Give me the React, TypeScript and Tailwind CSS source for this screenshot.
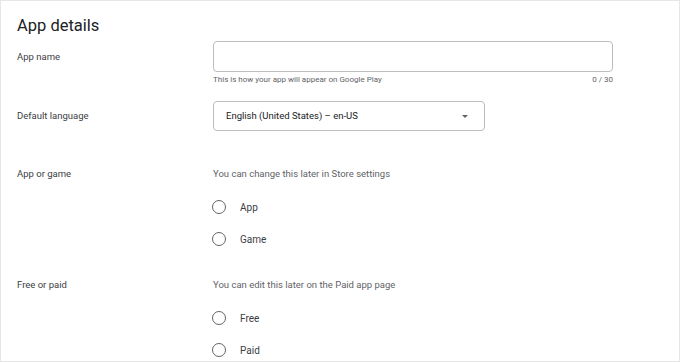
import React from "react";

const font = { fontFamily: "Roboto, 'Liberation Sans', sans-serif" };

function Radio({ label }: { label: string }) {
  return (
    <label className="flex items-center h-[32px] cursor-pointer">
      <span className="w-[14px] h-[14px] rounded-full border-[1.5px] border-[#5f6368] ml-[-1px]" />
      <span className="ml-[14px] text-[10px] text-[#3c4043]">{label}</span>
    </label>
  );
}

function Row({ label, labelPad, children }: { label: string; labelPad: string; children: React.ReactNode }) {
  return (
    <div className="flex">
      <div className={`w-[196px] shrink-0 text-[9.5px] leading-[16px] text-[#3c4043] ${labelPad}`}>{label}</div>
      <div className="flex-1">{children}</div>
    </div>
  );
}

export default function App() {
  return (
    <div style={font} className="w-[680px] h-[362px] overflow-hidden bg-white border border-[#e6e6e6] pl-[16px]">
      <h1 className="pt-[13px] text-[16.5px] leading-[24px] text-[#202124]">App details</h1>

      <div className="mt-[3px]">
        <Row label="App name" labelPad="pt-[8px]">
          <div className="w-[400px] h-[31px] rounded-[4px] border border-[#bdbdbd]" />
          <div className="w-[400px] mt-[2px] flex justify-between text-[8px] leading-[12px] text-[#5f6368]">
            <span>This is how your app will appear on Google Play</span>
            <span>0 / 30</span>
          </div>
        </Row>
      </div>

      <div className="mt-[15px]">
        <Row label="Default language" labelPad="pt-[7px]">
          <div className="w-[272px] h-[30px] rounded-[4px] border border-[#bdbdbd] flex items-center justify-between pl-[12px] pr-[16px]">
            <span className="text-[9.5px] text-[#202124]">English (United States) – en-US</span>
            <svg width="6" height="3" viewBox="0 0 6 3">
              <path d="M0 0 L6 0 L3 3 Z" fill="#5f6368" />
            </svg>
          </div>
        </Row>
      </div>

      <div className="mt-[35px]">
        <Row label="App or game" labelPad="">
          <div className="text-[9.5px] leading-[16px] text-[#5f6368]">You can change this later in Store settings</div>
          <div className="mt-[9px]">
            <Radio label="App" />
            <Radio label="Game" />
          </div>
        </Row>
      </div>

      <div className="mt-[22px]">
        <Row label="Free or paid" labelPad="">
          <div className="text-[9.5px] leading-[16px] text-[#5f6368]">You can edit this later on the Paid app page</div>
          <div className="mt-[9px]">
            <Radio label="Free" />
            <Radio label="Paid" />
          </div>
        </Row>
      </div>
    </div>
  );
}
